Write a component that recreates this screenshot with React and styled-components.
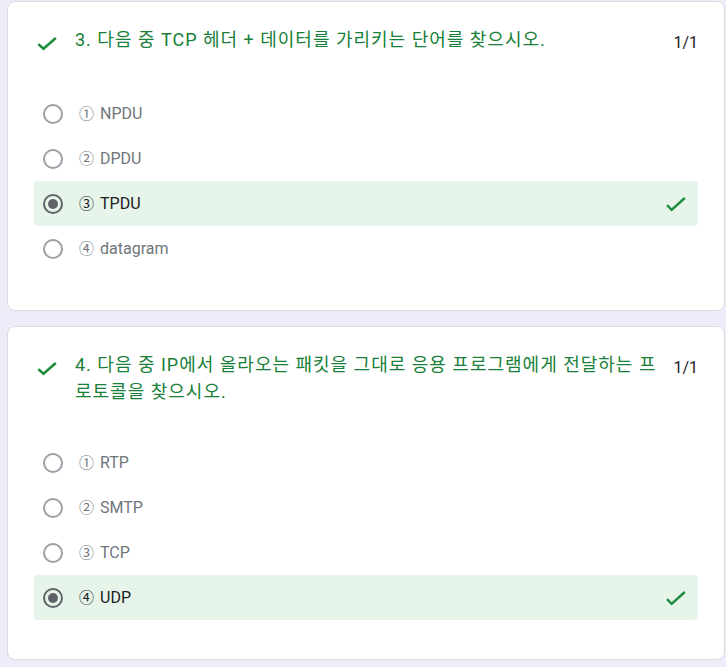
import React from "react";
import styled, { createGlobalStyle } from "styled-components";

const GlobalStyle = createGlobalStyle`
  html, body { margin: 0; padding: 0; background: #f0ebf8; }
  body { font-family: Roboto, "Noto Sans CJK KR", sans-serif; }
`;

const Page = styled.div`
  display: flex;
  flex-direction: column;
  gap: 15px;
  padding: 1px 1px 8px 7px;
`;

const Card = styled.section`
  background: #fff;
  border: 1px solid #dadce0;
  border-radius: 8px;
  padding: 24px 26px 39px 26px;
`;

const TitleRow = styled.div`
  display: flex;
  align-items: flex-start;
  margin-bottom: 35px;
`;

const TitleIcon = styled.svg`
  flex: none;
  width: 24px;
  height: 24px;
  margin-top: 6px;
  margin-right: 17px;
`;

const TitleText = styled.div`
  flex: 1;
  min-width: 0;
  font-family: Roboto, "Noto Sans CJK KR", sans-serif;
  font-size: 18px;
  line-height: 27px;
  letter-spacing: 1px;
  color: #188038;
`;

const Score = styled.div`
  flex: none;
  margin-left: 10px;
  padding-top: 3px;
  font-family: Roboto, sans-serif;
  font-size: 16px;
  line-height: 27px;
  color: #202124;
`;

const Options = styled.div`
  display: flex;
  flex-direction: column;
`;

const OptionRow = styled.div`
  display: flex;
  align-items: center;
  height: 45px;
  padding: 0 10px 0 9px;
  border-radius: 4px;
  background: ${(p) => (p.$correct ? "#e6f4ea" : "transparent")};
`;

const Radio = styled.span`
  flex: none;
  box-sizing: border-box;
  width: 20px;
  height: 20px;
  border-radius: 50%;
  border: 2px solid ${(p) => (p.$checked ? "#5f6368" : "#9aa0a6")};
  display: flex;
  align-items: center;
  justify-content: center;
  margin-right: 16px;
  &::after {
    content: "";
    display: ${(p) => (p.$checked ? "block" : "none")};
    width: 10px;
    height: 10px;
    border-radius: 50%;
    background: #5f6368;
  }
`;

const OptionLabel = styled.span`
  flex: 1;
  font-family: Roboto, "Noto Sans CJK KR", sans-serif;
  font-size: 16px;
  line-height: 24px;
  color: ${(p) => (p.$checked ? "#202124" : "#70757a")};
`;

const Num = styled.span`
  font-family: "Noto Sans CJK KR", sans-serif;
  font-size: 15px;
  margin-right: 6px;
`;

const RowCheck = styled.svg`
  flex: none;
  width: 24px;
  height: 24px;
`;

const TitleCheck = () => (
  <TitleIcon viewBox="0 0 24 24">
    <polyline
      points="4.3,12.1 9.5,16.8 21.8,6.1"
      fill="none"
      stroke="#1e8e3e"
      strokeWidth="2.6"
    />
  </TitleIcon>
);

const CorrectCheck = () => (
  <RowCheck viewBox="0 0 24 24">
    <polyline
      points="3,13.2 7.6,17.8 20.8,6"
      fill="none"
      stroke="#1e8e3e"
      strokeWidth="2.4"
    />
  </RowCheck>
);

const questions = [
  {
    title: "3. 다음 중 TCP 헤더 + 데이터를 가리키는 단어를 찾으시오.",
    options: [
      ["①", "NPDU"],
      ["②", "DPDU"],
      ["③", "TPDU"],
      ["④", "datagram"],
    ],
    answer: 2,
  },
  {
    title:
      "4. 다음 중 IP에서 올라오는 패킷을 그대로 응용 프로그램에게 전달하는 프로토콜을 찾으시오.",
    options: [
      ["①", "RTP"],
      ["②", "SMTP"],
      ["③", "TCP"],
      ["④", "UDP"],
    ],
    answer: 3,
  },
];

export default function App() {
  return (
    <>
      <GlobalStyle />
      <Page>
        {questions.map((q, qi) => (
          <Card key={qi}>
            <TitleRow>
              <TitleCheck />
              <TitleText>{q.title}</TitleText>
              <Score>1/1</Score>
            </TitleRow>
            <Options>
              {q.options.map(([n, label], i) => {
                const checked = i === q.answer;
                return (
                  <OptionRow key={i} $correct={checked}>
                    <Radio $checked={checked} />
                    <OptionLabel $checked={checked}>
                      <Num>{n}</Num>
                      {label}
                    </OptionLabel>
                    {checked && <CorrectCheck />}
                  </OptionRow>
                );
              })}
            </Options>
          </Card>
        ))}
      </Page>
    </>
  );
}
